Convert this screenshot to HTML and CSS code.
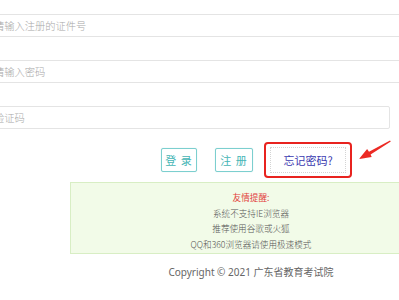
FILE: index.html
```html
<!DOCTYPE html>
<html lang="zh-CN">
<head>
<meta charset="utf-8">
<title>登录</title>
<link rel="stylesheet" href="styles.css">
</head>
<body>
<div class="page">
  <div class="field field-wide">请输入注册的证件号</div>
  <div class="field field-wide">请输入密码</div>
  <div class="field field-code">验证码</div>
  <div class="actions">
    <button class="btn">登 录</button>
    <button class="btn">注 册</button>
    <div class="forgot-mark">
      <a class="forgot">忘记密码?</a>
    </div>
    <svg class="arrow" width="38" height="24" viewBox="0 0 38 24" aria-hidden="true">
      <polygon fill="#ec2a24" points="3,20 11.1,10.1 13,12.8 34,1.4 34.8,2.6 14.6,15.4 15.7,17.9"/>
    </svg>
  </div>
  <div class="notice">
    <p class="notice-title">友情提醒:</p>
    <p>系统不支持IE浏览器</p>
    <p>推荐使用谷歌或火狐</p>
    <p>QQ和360浏览器请使用极速模式</p>
  </div>
  <div class="copyright">Copyright © 2021 广东省教育考试院</div>
</div>
</body>
</html>
```
FILE: styles.css
```css
html, body {
  margin: 0;
  padding: 0;
  background: #ffffff;
}
body {
  width: 399px;
  height: 300px;
  overflow: hidden;
  font-family: "Noto Sans", "Noto Sans CJK SC", sans-serif;
}
.page {
  display: flex;
  flex-direction: column;
  width: 560px;
  margin-left: -17px;
  padding-top: 14px;
}
.field {
  box-sizing: border-box;
  height: 23px;
  border: 1px solid #e4e4e4;
  border-radius: 2px;
  padding-left: 10px;
  display: flex;
  align-items: center;
  font-family: "Noto Sans CJK SC", sans-serif;
  font-size: 10.25px;
  font-weight: 300;
  color: #a8a8a8;
  margin-bottom: 23px;
}
.field-wide {
  width: 560px;
}
.field-code {
  width: 407px;
  margin-bottom: 0;
}
.actions {
  display: flex;
  align-items: center;
  padding-left: 178px;
  margin-top: 13px;
  height: 36px;
}
.btn {
  box-sizing: border-box;
  height: 24px;
  width: 36px;
  padding: 0;
  border: 1px solid #7ccfcf;
  border-radius: 2px;
  background: #ffffff;
  color: #45b5b5;
  font-family: "Noto Sans CJK SC", sans-serif;
  font-size: 11px;
  letter-spacing: 1px;
  box-shadow: 0 0 1px rgba(80, 180, 180, 0.4);
}
.btn + .btn {
  margin-left: 18px;
  width: 38px;
}
.forgot-mark {
  box-sizing: border-box;
  margin-left: 11px;
  width: 88px;
  height: 36px;
  border: 2px solid #e8231f;
  border-radius: 4px;
  padding: 3px 4px;
  display: flex;
}
.forgot {
  flex: 1;
  display: flex;
  align-items: center;
  justify-content: center;
  border: 1px dotted #d4d4d4;
  font-family: "Noto Sans CJK SC", sans-serif;
  font-size: 11px;
  color: #3a3ab0;
}
.arrow {
  align-self: flex-start;
  margin-top: -3px;
  margin-left: 4px;
}
.notice {
  box-sizing: border-box;
  margin-top: 4px;
  margin-left: 87px;
  width: 362px;
  height: 72px;
  background: #f2fbe8;
  border: 1px solid #d8eec4;
  padding-top: 7px;
  text-align: center;
  font-family: "Noto Sans CJK SC", sans-serif;
  font-size: 8.6px;
  font-weight: 300;
  color: #555555;
}
.notice p {
  margin: 0;
  line-height: 15.5px;
}
.notice .notice-title {
  color: #e23b3b;
  font-weight: 400;
}
.copyright {
  margin-left: 87px;
  width: 362px;
  margin-top: 10px;
  line-height: 16px;
  text-align: center;
  font-size: 10px;
  color: #666666;
}
```
